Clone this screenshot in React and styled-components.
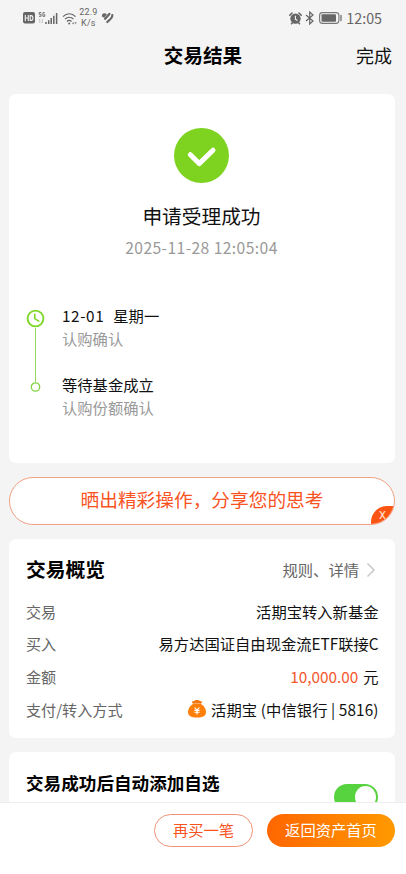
import React from 'react';
import styled, { createGlobalStyle } from 'styled-components';

const GlobalStyle = createGlobalStyle`
  * { box-sizing: border-box; }
  html, body { margin: 0; padding: 0; background: #f4f4f4; overflow: hidden; }
  body { font-family: "Noto Sans CJK SC", sans-serif; color: #111; }
`;

const Screen = styled.div`
  width: 406px;
  height: 874px;
  display: flex;
  flex-direction: column;
  overflow: hidden;
  background: #f4f4f4;
`;

const StatusBar = styled.div`
  height: 36px;
  flex: none;
  display: flex;
  align-items: center;
  justify-content: space-between;
  padding: 0 24px 0 23px;
  color: #666;
`;

const StatusGroup = styled.div`
  display: flex;
  align-items: center;
  gap: ${(p) => p.$gap}px;
  svg { display: block; flex: none; }
`;

const Speed = styled.div`
  width: 19px;
  height: 20px;
  margin-left: -1px;
  display: flex;
  flex-direction: column;
  justify-content: space-between;
  font: 9px/9px Roboto, sans-serif;
  text-align: center;
  letter-spacing: 0.2px;
  white-space: nowrap;
`;

const Clock = styled.span`
  font-size: 14.3px;
  line-height: 18px;
  padding-bottom: 1px;
`;

const Header = styled.header`
  height: 38px;
  flex: none;
  display: grid;
  grid-template-columns: 1fr auto 1fr;
  align-items: center;
  padding: 0 14px;
`;

const PageTitle = styled.h1`
  grid-column: 2;
  margin: 0;
  font-size: 19.6px;
  line-height: 28px;
  font-weight: 700;
  color: #000;
`;

const DoneLink = styled.span`
  justify-self: end;
  font-size: 18px;
  line-height: 28px;
`;

const Content = styled.main`
  flex: 1;
  min-height: 0;
  overflow: hidden;
  display: flex;
  flex-direction: column;
  gap: 14px;
  padding: 20px 11px 0 9px;
`;

const Card = styled.section`
  flex: none;
  height: ${(p) => p.$height}px;
  background: #fff;
  border-radius: 7px;
  padding: ${(p) => p.$pad};
`;

const Result = styled.div`
  display: flex;
  flex-direction: column;
  align-items: center;
  margin-right: 1px;
  svg { display: block; }
`;

const ResultTitle = styled.div`
  margin-top: 18px;
  font-size: 19.7px;
  line-height: 30px;
  color: #111;
`;

const ResultTime = styled.div`
  margin-top: 5px;
  font-size: 15.7px;
  line-height: 24px;
  letter-spacing: 0.4px;
  color: #999;
`;

const Timeline = styled.div`
  display: grid;
  grid-template-columns: 19px 1fr;
  column-gap: 17px;
  margin-top: 44px;
`;

const Rail = styled.div`
  display: flex;
  flex-direction: column;
  align-items: center;
  padding-top: 5px;
  svg { display: block; flex: none; }
`;

const RailLine = styled.div`
  width: 1px;
  height: 54px;
  background: #94d765;
`;

const Steps = styled.div`
  display: flex;
  flex-direction: column;
  gap: 23px;
`;

const StepTitle = styled.div`
  display: flex;
  gap: 9px;
  font-size: 15.3px;
  line-height: 23px;
  color: #111;
`;

const StepDate = styled.span`
  letter-spacing: 0.6px;
`;

const StepNote = styled.div`
  font-size: 15.3px;
  line-height: 23px;
  color: #999;
`;

const Banner = styled.div`
  position: relative;
  flex: none;
  height: 48px;
  display: flex;
  align-items: center;
  justify-content: center;
  padding-bottom: 6px;
  border: 1px solid #f2a184;
  border-radius: 24px;
  overflow: hidden;
  background: #fff;
  color: #f9531f;
  font-size: 18.7px;
`;

const BannerClose = styled.span`
  position: absolute;
  right: -1px;
  bottom: -1px;
  width: 24px;
  height: 19px;
  padding-right: 1px;
  border-radius: 16px 0 0 0;
  background: #fc5513;
  color: #ffe6dc;
  font: 11px/20px Roboto, sans-serif;
  text-align: center;
`;

const CardHead = styled.div`
  display: flex;
  align-items: center;
  justify-content: space-between;
  height: 30px;
`;

const CardTitle = styled.h2`
  margin: 0;
  font-size: ${(p) => p.$size}px;
  line-height: 30px;
  font-weight: 700;
  color: #000;
`;

const RulesLink = styled.span`
  display: flex;
  align-items: center;
  gap: 7px;
  margin-right: 2px;
  font-size: 15.3px;
  line-height: 28px;
  color: #666;
  svg { margin-top: 2px; }
`;

const Rows = styled.dl`
  margin: 11px 0 0;
`;

const Row = styled.div`
  height: 32.6px;
  display: flex;
  align-items: center;
  justify-content: space-between;
  font-size: 15.3px;
  line-height: 23px;
  white-space: nowrap;
`;

const Label = styled.dt`
  color: #666;
  font-size: 15.1px;
`;

const Value = styled.dd`
  margin: 0 -0.5px 0 0;
  display: flex;
  align-items: center;
  gap: 5px;
  color: #111;
`;

const Amount = styled.span`
  color: #f5562c;
`;

const BankText = styled.span`
  letter-spacing: 0.1px;
`;

const Toggle = styled.span`
  width: 44px;
  height: 26px;
  margin-top: 27px;
  padding: 2px;
  display: flex;
  justify-content: flex-end;
  border-radius: 13px;
  background: #56d33e;
  &::after {
    content: "";
    width: 21px;
    height: 22px;
    border-radius: 50%;
    background: #fff;
  }
`;

const Footer = styled.footer`
  flex: none;
  height: 72px;
  display: flex;
  justify-content: flex-end;
  gap: 14px;
  padding: 11px 11px 0 0;
  border-top: 1px solid #ededed;
  background: #fff;
`;

const Button = styled.button`
  width: ${(p) => (p.$primary ? 128 : 99)}px;
  height: 33px;
  padding: 0 0 4px;
  border: ${(p) => (p.$primary ? '0' : '1px solid #ee9276')};
  border-radius: 17px;
  background: ${(p) => (p.$primary ? 'linear-gradient(90deg, #ff6600, #ff9900)' : '#fff')};
  color: ${(p) => (p.$primary ? '#fff' : '#f9531f')};
  font: 15.3px/22px "Noto Sans CJK SC", sans-serif;
`;

const HdIcon = () => (
  <svg width="12" height="12" viewBox="0 0 12 12">
    <rect width="12" height="11.5" rx="2" fill="#666" />
    <path d="M2.3 3v6M5.3 3v6M2.3 6h3M7.2 3.6v4.8h.8c2.6 0 2.6-4.8 0-4.8z" fill="none" stroke="#f4f4f4" strokeWidth="1.1" />
  </svg>
);

const SignalIcon = () => (
  <svg width="20" height="14" viewBox="0 0 20 14">
    <path d="M3.3 1.5H1.2v1.8h1.9v2H.9M6.8 1.7H4.9v3.6h1.9V3.7h-.9" fill="none" stroke="#666" strokeWidth="0.9" />
    <path d="M1.8 8v4M4.4 8v4M1 9l.8-1M3.6 11l.8 1" stroke="#b5b5b5" strokeWidth="0.7" />
    <path d="M8 13v-2M10.7 13V9.3M13.2 13V7M15.8 13V4.8M18.6 13V2" stroke="#666" strokeWidth="1.5" />
  </svg>
);

const WifiIcon = () => (
  <svg width="15" height="13" viewBox="0 0 15 13" fill="none" stroke="#666">
    <path d="M1 4.6c3.6-3.8 8.9-3.8 12.5 0M3 7.2c2.5-2.6 6-2.6 8.5 0M5 9.5c1.4-1.5 3-1.5 4.5 0" strokeWidth="1.2" />
    <circle cx="7.2" cy="11.5" r="1" fill="#666" stroke="none" />
    <path d="M11.2 10v2M10.3 11.2l.9.9.8-.9M13.6 12.2v-2M12.8 11l.8-.9.8.9" strokeWidth="0.6" />
  </svg>
);

const HealthIcon = () => (
  <svg width="13" height="12" viewBox="0 0 13 12" fill="none" stroke="#666" strokeLinecap="round">
    <path d="M1.6 4.1C1.4 2.3 3.2 1.3 4.9 2.4L3 4.8z" fill="#666" strokeWidth="1.4" />
    <path d="M8.400 1.900 4.100 6.800" strokeWidth="2.200" />
    <path d="M11.300 3c.5 2.600-2.300 4.700-5 7" strokeWidth="2.200" />
  </svg>
);

const AlarmIcon = () => (
  <svg width="13" height="13" viewBox="0 0 13 13">
    <path d="M.8 3.2 3 1M12.2 3.2 10 1M2.5 11.7l1-1M10.5 11.7l-1-1" stroke="#666" strokeWidth="1.6" strokeLinecap="round" />
    <circle cx="6.5" cy="6.6" r="5.2" fill="#666" />
    <path d="M6.4 3.7v3.4l2 1.4" fill="none" stroke="#f4f4f4" strokeWidth="1.1" />
  </svg>
);

const BluetoothIcon = () => (
  <svg width="11" height="14" viewBox="0 0 11 14" fill="none" stroke="#666" strokeWidth="1.2">
    <path d="m1 4 7 6-3.300 3V1L8 4 1 10" />
  </svg>
);

const BatteryIcon = () => (
  <svg width="24" height="12" viewBox="0 0 24 12">
    <rect x=".6" y=".6" width="19.3" height="10.8" rx="2.8" fill="none" stroke="#777" strokeWidth="1.1" />
    <rect x="2.5" y="2.3" width="14.5" height="7.4" rx="1" fill="#666" />
    <path d="M22 3.5v5" stroke="#777" strokeWidth="1.4" strokeLinecap="round" />
  </svg>
);

const SuccessIcon = () => (
  <svg width="55" height="55" viewBox="0 0 55 55">
    <circle cx="27.5" cy="27.5" r="27.5" fill="#7ed321" />
    <path d="m16.3 26.7 8.9 8.9 13.8-13.4" fill="none" stroke="#fff" strokeWidth="5" strokeLinecap="round" strokeLinejoin="round" />
  </svg>
);

const ClockIcon = () => (
  <svg width="19" height="19" viewBox="0 0 19 19" fill="none" stroke="#7ed82a">
    <circle cx="9.5" cy="9.5" r="7.9" strokeWidth="1.9" />
    <path d="M8.8 5.3v4.3l4 2.5" strokeWidth="1.6" strokeLinecap="round" strokeLinejoin="round" />
  </svg>
);

const DotIcon = () => (
  <svg width="11" height="10" viewBox="0 0 11 10">
    <circle cx="5.5" cy="5" r="4.2" fill="#fff" stroke="#83d345" strokeWidth="1.3" />
  </svg>
);

const ChevronIcon = () => (
  <svg width="10" height="16" viewBox="0 0 10 16">
    <path d="m1.5 1.5 6.5 6.5-6.5 6.5" fill="none" stroke="#c8c8c8" strokeWidth="1.5" />
  </svg>
);

const MoneyBagIcon = () => (
  <svg width="18" height="18" viewBox="0 0 18 18">
    <path d="M4.2 2.6c-.8-1 .3-1.8 1.3-1.3C6.8.3 7.8 0 9 0s2.2.3 3.5 1.3c1-.5 2.1.3 1.3 1.3L12.8 4H5.2z" fill="#f4740c" />
    <path d="M5.500 3.400h7" stroke="#ffd9b5" strokeWidth=".6" />
    <path d="M5 3.900h8c2.800 1.500 5 4.800 5 8.100 0 3.800-3 5.500-9 5.500s-9-1.700-9-5.500C0 8.700 2.200 5.400 5 3.900z" fill="#ff7f09" />
    <path d="m6.600 7.500 2.400 2.700 2.400-2.700M6.400 10.400h5.200M6.400 12.300h5.200M9 10v4.600" fill="none" stroke="#fff" strokeWidth="1.100" />
  </svg>
);

export default function App() {
  return (
    <Screen>
      <GlobalStyle />
      <StatusBar>
        <StatusGroup $gap={3.3}>
          <HdIcon />
          <SignalIcon />
          <WifiIcon />
          <Speed><span>22.9</span><span>K/s</span></Speed>
          <HealthIcon />
        </StatusGroup>
        <StatusGroup $gap={3}>
          <AlarmIcon />
          <BluetoothIcon />
          <BatteryIcon />
          <Clock>12:05</Clock>
        </StatusGroup>
      </StatusBar>
      <Header>
        <PageTitle>交易结果</PageTitle>
        <DoneLink>完成</DoneLink>
      </Header>
      <Content>
        <Card $height={369} $pad="34px 17px 0">
          <Result>
            <SuccessIcon />
            <ResultTitle>申请受理成功</ResultTitle>
            <ResultTime>2025-11-28 12:05:04</ResultTime>
          </Result>
          <Timeline>
            <Rail>
              <ClockIcon />
              <RailLine />
              <DotIcon />
            </Rail>
            <Steps>
              <div>
                <StepTitle><StepDate>12-01</StepDate>星期一</StepTitle>
                <StepNote>认购确认</StepNote>
              </div>
              <div>
                <StepTitle>等待基金成立</StepTitle>
                <StepNote>认购份额确认</StepNote>
              </div>
            </Steps>
          </Timeline>
        </Card>
        <Banner>
          晒出精彩操作，分享您的思考
          <BannerClose>X</BannerClose>
        </Banner>
        <Card $height={199} $pad="15px 17px 0">
          <CardHead>
            <CardTitle $size={19.8}>交易概览</CardTitle>
            <RulesLink>规则、详情<ChevronIcon /></RulesLink>
          </CardHead>
          <Rows>
            <Row><Label>交易</Label><Value>活期宝转入新基金</Value></Row>
            <Row><Label>买入</Label><Value>易方达国证自由现金流ETF联接C</Value></Row>
            <Row><Label>金额</Label><Value><Amount>10,000.00</Amount>元</Value></Row>
            <Row>
              <Label>支付/转入方式</Label>
              <Value><MoneyBagIcon /><BankText>活期宝 (中信银行 | 5816)</BankText></Value>
            </Row>
          </Rows>
        </Card>
        <Card $height={100} $pad="16px 17px 0">
          <CardHead>
            <CardTitle $size={17.6}>交易成功后自动添加自选</CardTitle>
            <Toggle />
          </CardHead>
        </Card>
      </Content>
      <Footer>
        <Button>再买一笔</Button>
        <Button $primary>返回资产首页</Button>
      </Footer>
    </Screen>
  );
}
